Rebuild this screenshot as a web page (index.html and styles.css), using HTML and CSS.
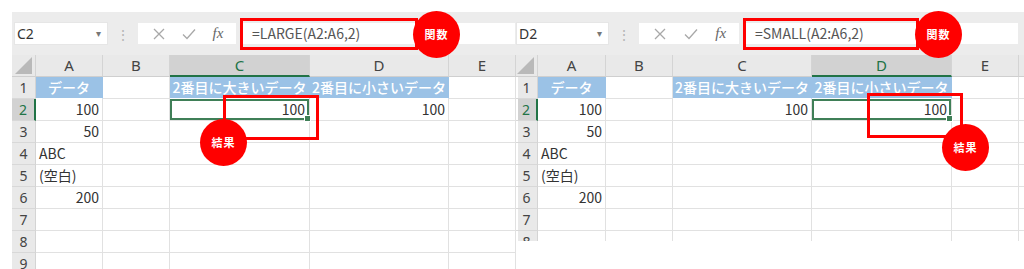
FILE: index.html
```html
<!DOCTYPE html>
<html lang="ja">
<head>
    <meta charset="UTF-8">
    <title>LARGE / SMALL</title>
    <link rel="stylesheet" href="styles.css">
</head>
<body>
<div class="page">
    <!-- LARGE sheet -->
    <section class="sheet sheet-left">
        <div class="toolbar">
            <div class="namebox">C2<span class="caret">▾</span></div>
            <div class="dots">⋮</div>
            <div class="fxbox">
                <svg class="ico" width="12" height="12" viewBox="0 0 12 12"><path d="M1,1 L11,11 M11,1 L1,11" stroke="#a8a8a8" stroke-width="1.3" fill="none"/></svg>
                <svg class="ico" width="14" height="12" viewBox="0 0 14 12"><path d="M1,6.5 L5,10.5 L13,1.5" stroke="#a8a8a8" stroke-width="1.3" fill="none"/></svg>
                <span class="fx">fx</span>
            </div>
            <div class="formula">=LARGE(A2:A6,2)</div>
        </div>
        <div class="grid">
            <div class="row head">
                <div class="corner"><span class="tri"></span></div>
                <div>A</div><div>B</div><div class="on">C</div><div>D</div><div>E</div>
            </div>
            <div class="row">
                <div class="rh">1</div>
                <div class="blue">データ</div><div></div><div class="blue">2番目に大きいデータ</div><div class="blue">2番目に小さいデータ</div><div></div>
            </div>
            <div class="row">
                <div class="rh on">2</div>
                <div class="num">100</div><div></div><div class="num sel">100</div><div class="num">100</div><div></div>
            </div>
            <div class="row">
                <div class="rh">3</div>
                <div class="num">50</div><div></div><div></div><div></div><div></div>
            </div>
            <div class="row">
                <div class="rh">4</div>
                <div>ABC</div><div></div><div></div><div></div><div></div>
            </div>
            <div class="row">
                <div class="rh">5</div>
                <div>(空白)</div><div></div><div></div><div></div><div></div>
            </div>
            <div class="row">
                <div class="rh">6</div>
                <div class="num">200</div><div></div><div></div><div></div><div></div>
            </div>
            <div class="row">
                <div class="rh">7</div>
                <div></div><div></div><div></div><div></div><div></div>
            </div>
            <div class="row">
                <div class="rh">8</div>
                <div></div><div></div><div></div><div></div><div></div>
            </div>
            <div class="row">
                <div class="rh">9</div>
                <div></div><div></div><div></div><div></div><div></div>
            </div>
        </div>
    </section>

    <!-- SMALL sheet -->
    <section class="sheet sheet-right">
        <div class="toolbar">
            <div class="namebox">D2<span class="caret">▾</span></div>
            <div class="dots">⋮</div>
            <div class="fxbox">
                <svg class="ico" width="12" height="12" viewBox="0 0 12 12"><path d="M1,1 L11,11 M11,1 L1,11" stroke="#a8a8a8" stroke-width="1.3" fill="none"/></svg>
                <svg class="ico" width="14" height="12" viewBox="0 0 14 12"><path d="M1,6.5 L5,10.5 L13,1.5" stroke="#a8a8a8" stroke-width="1.3" fill="none"/></svg>
                <span class="fx">fx</span>
            </div>
            <div class="formula">=SMALL(A2:A6,2)</div>
        </div>
        <div class="grid">
            <div class="row head">
                <div class="corner"><span class="tri"></span></div>
                <div>A</div><div>B</div><div>C</div><div class="on">D</div><div>E</div><div></div>
            </div>
            <div class="row">
                <div class="rh">1</div>
                <div class="blue">データ</div><div></div><div class="blue">2番目に大きいデータ</div><div class="blue">2番目に小さいデータ</div><div></div><div></div>
            </div>
            <div class="row">
                <div class="rh on">2</div>
                <div class="num">100</div><div></div><div class="num">100</div><div class="num sel">100</div><div></div><div></div>
            </div>
            <div class="row">
                <div class="rh">3</div>
                <div class="num">50</div><div></div><div></div><div></div><div></div><div></div>
            </div>
            <div class="row">
                <div class="rh">4</div>
                <div>ABC</div><div></div><div></div><div></div><div></div><div></div>
            </div>
            <div class="row">
                <div class="rh">5</div>
                <div>(空白)</div><div></div><div></div><div></div><div></div><div></div>
            </div>
            <div class="row">
                <div class="rh">6</div>
                <div class="num">200</div><div></div><div></div><div></div><div></div><div></div>
            </div>
            <div class="row">
                <div class="rh">7</div>
                <div></div><div></div><div></div><div></div><div></div><div></div>
            </div>
            <div class="row">
                <div class="rh">8</div>
                <div></div><div></div><div></div><div></div><div></div><div></div>
            </div>
        </div>
    </section>

    <!-- Callouts -->
    <div class="mark" style="left:240px; top:18px; width:178px; height:32px;"></div>
    <div class="badge" style="left:413px; top:11px;">関数</div>
    <div class="mark" style="left:223px; top:95px; width:96px; height:45px;"></div>
    <div class="badge" style="left:200px; top:119px;">結果</div>

    <div class="mark" style="left:743px; top:18px; width:176px; height:32px;"></div>
    <div class="badge" style="left:915px; top:11px;">関数</div>
    <div class="mark" style="left:867px; top:93px; width:96px; height:45px;"></div>
    <div class="badge" style="left:942px; top:124px;">結果</div>
</div>
</body>
</html>
```

FILE: styles.css
```css
* {
    box-sizing: border-box;
}
body {
    margin: 0;
    background: #fff;
    font-family: "Noto Sans CJK JP", "Noto Sans", sans-serif;
    color: #333;
}
.page {
    position: relative;
    display: flex;
    align-items: flex-start;
    width: 1024px;
    height: 269px;
    padding-top: 12px;
    overflow: hidden;
}
.sheet {
    overflow: hidden;
    background: #fff;
}
.sheet-left {
    margin-left: 12px;
    width: 504px;
    height: 257px;
}
.sheet-right {
    width: 508px;
    height: 229px;
}

/* Formula bar */
.toolbar {
    height: 43px;
    background: #ececec;
    display: flex;
    align-items: center;
}
.sheet-left .toolbar { padding-left: 2px; }
.namebox {
    position: relative;
    width: 94px;
    height: 23px;
    background: #fff;
    border: 1px solid #e6e6e6;
    font-family: "Noto Sans", sans-serif;
    font-size: 14px;
    line-height: 21px;
    padding-left: 2px;
    color: #333;
}
.sheet-right .namebox { width: 93px; }
.caret {
    position: absolute;
    right: 6px;
    top: 0;
    font-size: 10px;
    color: #777;
}
.dots {
    width: 29px;
    text-align: center;
    color: #b5b5b5;
    font-size: 14px;
}
.fxbox {
    width: 100px;
    height: 23px;
    background: #fff;
    border: 1px solid #ececec;
    display: flex;
    align-items: center;
    justify-content: space-around;
    padding: 0 4px 0 6px;
}
.sheet-right .fxbox { width: 102px; }
.fx {
    font-family: "Liberation Serif", serif;
    font-style: italic;
    font-size: 15px;
    color: #666;
}
.formula {
    margin-left: 3px;
    width: 276px;
    height: 23px;
    background: #fff;
    border: 1px solid #ececec;
    font-size: 14px;
    line-height: 21px;
    padding-left: 11px;
    color: #555;
}
.sheet-left .formula { flex: 1; }

/* Cells */
.row {
    display: grid;
    height: 22px;
}
.sheet-left .row { grid-template-columns: 24px 67px 67px 140px 139px 67px; }
.sheet-right .row { grid-template-columns: 22px 68px 67px 139px 140px 67px 1fr; }
.row > div {
    border-right: 1px solid #e1e1e1;
    border-bottom: 1px solid #e1e1e1;
    font-size: 14px;
    line-height: 21px;
    padding: 0 3px;
    white-space: nowrap;
    overflow: hidden;
}
.row.head > div {
    background: #e9e9e9;
    border-right-color: #d4d4d4;
    border-bottom-color: #cfcfcf;
    text-align: center;
    font-family: "Noto Sans", sans-serif;
    font-size: 15px;
    color: #444;
}
.row.head > div.on {
    background: #d2d2d2;
    color: #217346;
    border-bottom: 2px solid #217346;
}
.row.head > .corner {
    position: relative;
}
.tri {
    position: absolute;
    right: 3px;
    bottom: 2px;
    width: 0;
    height: 0;
    border-left: 17px solid transparent;
    border-bottom: 17px solid #b9b9b9;
}
.row > .rh {
    background: #e9e9e9;
    border-right-color: #d4d4d4;
    border-bottom-color: #d8d8d8;
    text-align: center;
    font-family: "Noto Sans", sans-serif;
    color: #444;
    padding: 0;
}
.row > .rh.on {
    background: #d2d2d2;
    color: #217346;
    border-right: 2px solid #217346;
}
.sheet-right .rh {
    box-shadow: inset 2px 0 0 #fff;
}
.row > .blue {
    background: #9bc2e6;
    color: #fff;
    text-align: center;
    border-right-color: #9bc2e6;
    border-bottom-color: #fff;
    font-weight: 500;
    padding: 0;
}
.row > .num {
    text-align: right;
}
.row > .sel {
    position: relative;
    overflow: visible;
    box-shadow: inset 0 0 0 2px #3f7f57;
    padding-right: 4px;
}
.sel::after {
    content: "";
    position: absolute;
    right: -2px;
    bottom: -2px;
    width: 5px;
    height: 5px;
    background: #3f7f57;
    border: 1px solid #fff;
}

/* Callouts */
.mark {
    position: absolute;
    border: 3px solid #ff0000;
}
.badge {
    position: absolute;
    width: 47px;
    height: 47px;
    border-radius: 50%;
    background: #ff0000;
    color: #fff;
    font-size: 11px;
    font-weight: 700;
    line-height: 47px;
    text-align: center;
    letter-spacing: 1px;
}
```
